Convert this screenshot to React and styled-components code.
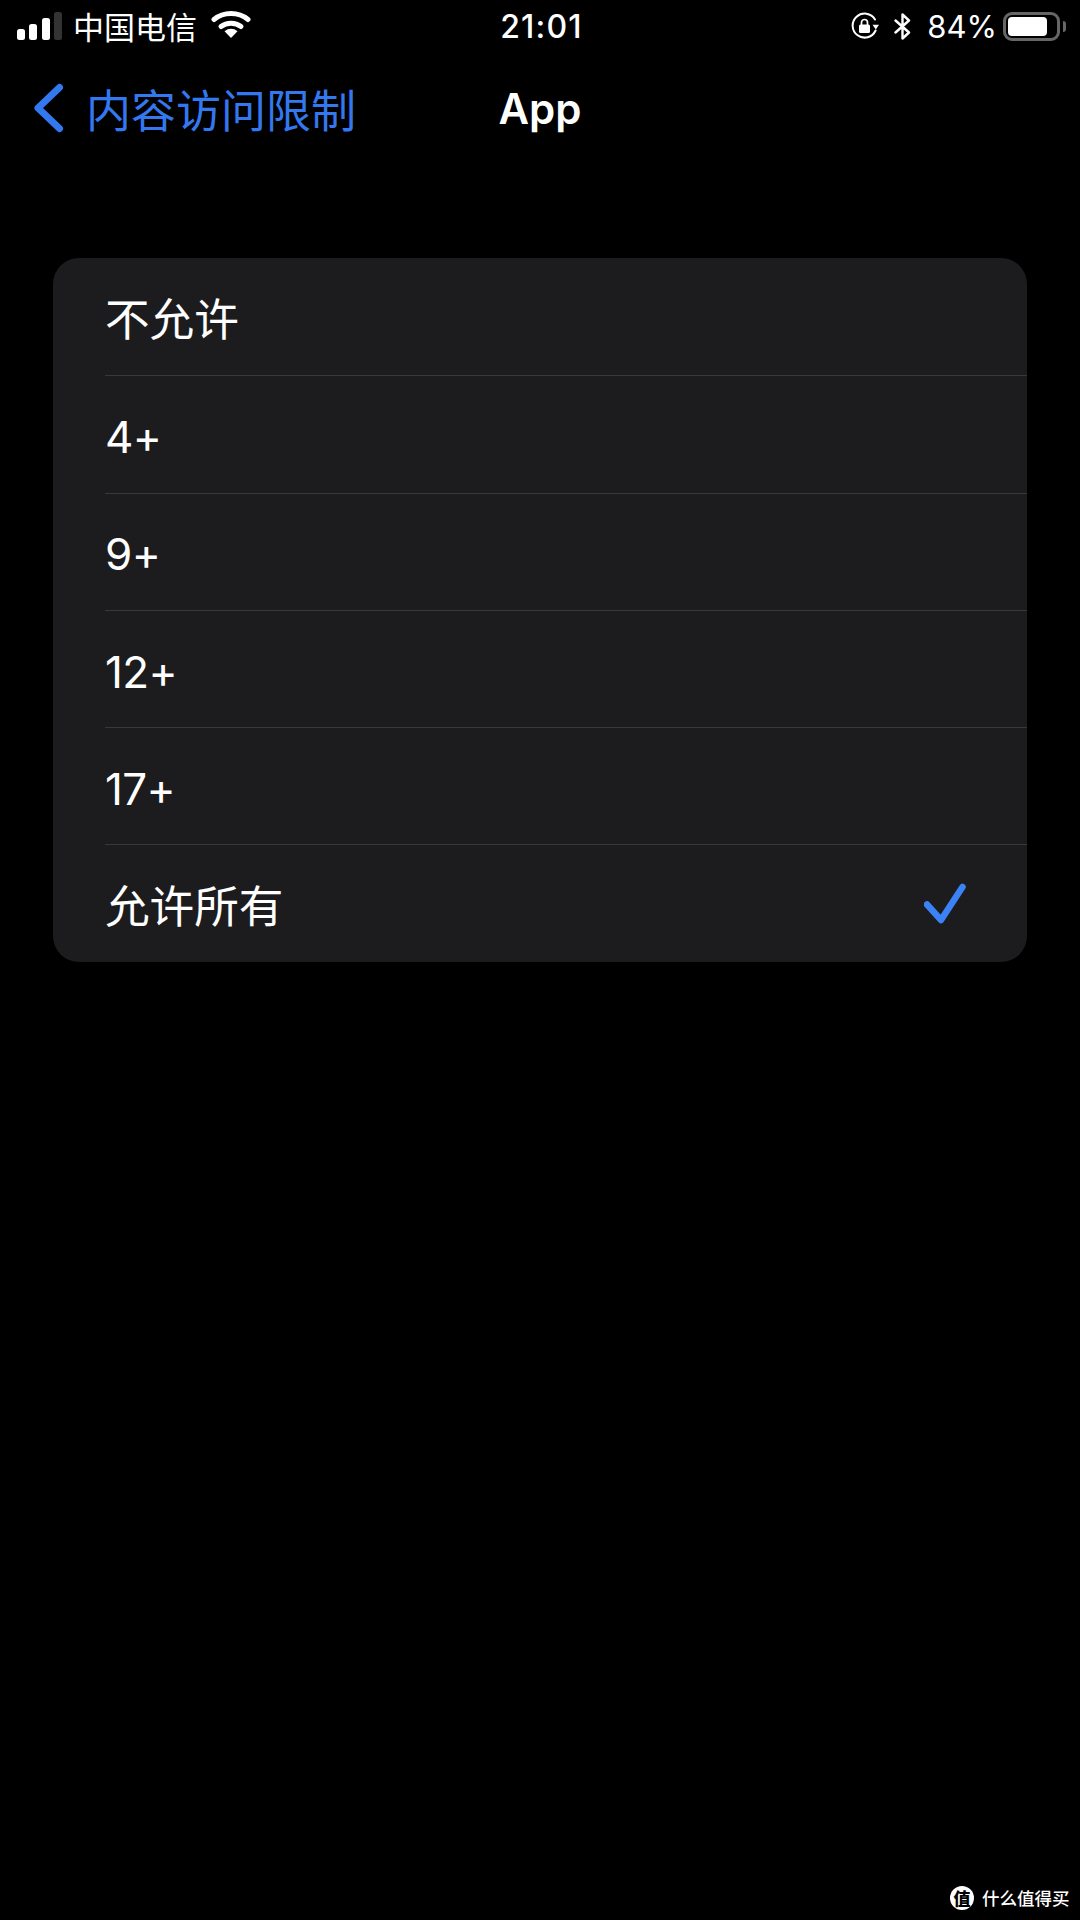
import React from 'react';
import styled, { createGlobalStyle } from 'styled-components';

const cjk = '"Noto Sans CJK SC", "Noto Sans", sans-serif';
const latin = 'Inter, "Noto Sans CJK SC", sans-serif';

const GlobalStyle = createGlobalStyle`
  html, body {
    margin: 0;
    padding: 0;
    background: #000;
  }
`;

const Page = styled.div`
  position: relative;
  width: 1080px;
  height: 1920px;
  background: #000;
  overflow: hidden;
  font-family: ${cjk};
  color: #fff;
`;

const StatusBar = styled.div`
  height: 52px;
  display: grid;
  grid-template-columns: 1fr auto 1fr;
  align-items: center;
  padding: 0 14px 0 17px;
`;

const StatusLeft = styled.div`
  display: flex;
  align-items: center;
`;

const StatusRight = styled.div`
  display: flex;
  align-items: center;
  justify-content: flex-end;
`;

const Carrier = styled.span`
  font-size: 31px;
  line-height: 46px;
  font-weight: 400;
  margin-left: 11px;
`;

const Clock = styled.span`
  font-family: ${latin};
  font-size: 32px;
  font-weight: 500;
  letter-spacing: 1.2px;
  line-height: 46px;
  padding-top: 2px;
`;

const Percent = styled.span`
  font-family: ${latin};
  font-size: 31px;
  font-weight: 400;
  line-height: 46px;
  padding-top: 2px;
  margin: 0 6px 0 16px;
`;

const WifiIcon = styled.svg`
  margin-left: 14px;
  margin-bottom: 6px;
`;

const LockIcon = styled.svg`
  margin-right: 15px;
`;

const Battery = styled.div`
  position: relative;
  box-sizing: border-box;
  width: 57px;
  height: 29px;
  border: 3px solid #666;
  border-radius: 9px;
  padding: 2px;
  margin-right: 6px;
  &::after {
    content: '';
    position: absolute;
    right: -9px;
    top: 6px;
    width: 3px;
    height: 11px;
    border-radius: 0 3px 3px 0;
    background: #666;
  }
`;

const BatteryFill = styled.div`
  width: 84%;
  height: 100%;
  background: #fff;
  border-radius: 4px;
`;

const NavBar = styled.div`
  position: relative;
  height: 82px;
  margin-top: 15px;
  display: flex;
  align-items: center;
  padding-left: 33px;
`;

const BackLink = styled.div`
  display: flex;
  align-items: center;
  gap: 22px;
  color: #3478f0;
  font-size: 45px;
  font-weight: 400;
`;

const NavTitle = styled.div`
  position: absolute;
  left: 0;
  right: 0;
  text-align: center;
  font-family: ${latin};
  font-size: 42px;
  font-weight: 600;
`;

const Card = styled.div`
  margin: 109px 53px 0;
  background: #1c1c1e;
  border-radius: 26px;
  overflow: hidden;
`;

const Row = styled.div`
  box-sizing: border-box;
  height: 117.3px;
  margin-left: 52px;
  padding-right: 61px;
  display: flex;
  align-items: center;
  justify-content: space-between;
  border-top: ${(p) => (p.$first ? 'none' : '1px solid #38383a')};
  font-size: 44.6px;
  font-weight: 400;
`;

const LatinLabel = styled.span`
  font-family: ${latin};
  font-size: 44px;
  letter-spacing: -0.6px;
  padding-top: 5px;
`;

const Watermark = styled.div`
  position: absolute;
  left: 950px;
  top: 1886px;
  display: flex;
  align-items: center;
  gap: 8px;
  font-size: 17.5px;
  font-weight: 500;
  line-height: 24px;
`;

const WatermarkBadge = styled.div`
  width: 24px;
  height: 24px;
  border-radius: 50%;
  background: #fff;
  color: #000;
  font-size: 17px;
  font-weight: 900;
  line-height: 24px;
  text-align: center;
`;

const options = [
  { label: '不允许' },
  { label: '4+', latin: true },
  { label: '9+', latin: true },
  { label: '12+', latin: true },
  { label: '17+', latin: true },
  { label: '允许所有', checked: true },
];

const SignalBars = () => (
  <svg width="45" height="28" viewBox="0 0 45 28">
    <rect x="0" y="17" width="8" height="11" rx="2.5" fill="#fff" />
    <rect x="12" y="12" width="8" height="16" rx="2.5" fill="#fff" />
    <rect x="25" y="6" width="8" height="22" rx="2.5" fill="#fff" />
    <rect x="37" y="0" width="8" height="28" rx="2.5" fill="#333" />
  </svg>
);

const Wifi = () => (
  <WifiIcon width="40" height="29" viewBox="0 0 40 29" fill="none">
    <path d="M3 10.5C12.5 2.5 27.5 2.5 37 10.5" stroke="#fff" strokeWidth="5" strokeLinecap="round" />
    <path d="M10 17.5C15.5 13 24.5 13 30 17.5" stroke="#fff" strokeWidth="5" strokeLinecap="round" />
    <path d="M13.5 22.3C17.5 19 22.5 19 26.5 22.3L20 29Z" fill="#fff" />
  </WifiIcon>
);

const RotationLock = () => (
  <LockIcon width="28" height="28" viewBox="0 0 28 28" fill="none">
    <path d="M24.6 18.5A12 12 0 1 1 24 7.5" stroke="#fff" strokeWidth="2" strokeLinecap="round" />
    <path d="M21.5 12.8H28L24.8 17.5Z" fill="#fff" />
    <rect x="8" y="12.5" width="11" height="8.5" rx="1.5" fill="#fff" />
    <path d="M10.5 13V10.5a3 3 0 0 1 6 0V13" stroke="#fff" strokeWidth="1.7" />
  </LockIcon>
);

const Bluetooth = () => (
  <svg width="17" height="27" viewBox="0 0 17 27" fill="none">
    <path d="M1.5 7.5L15 19.5L8.5 25.5V1.5L15 7.5L1.5 19.5" stroke="#fff" strokeWidth="2.4" strokeLinejoin="round" strokeLinecap="round" />
  </svg>
);

const BackChevron = () => (
  <svg width="31" height="50" viewBox="0 0 31 50" fill="none">
    <path d="M26.5 4.5L5 25L26.5 45.5" stroke="#3478f0" strokeWidth="7" strokeLinecap="round" strokeLinejoin="round" />
  </svg>
);

const CheckMark = () => (
  <svg width="42" height="42" viewBox="0 0 42 42" fill="none">
    <path d="M3 21.5L17 37L38.5 4" stroke="#3b82f6" strokeWidth="6.5" strokeLinecap="round" strokeLinejoin="round" />
  </svg>
);

const App = () => {
  return (
    <Page>
      <GlobalStyle />
      <StatusBar>
        <StatusLeft>
          <SignalBars />
          <Carrier>中国电信</Carrier>
          <Wifi />
        </StatusLeft>
        <Clock>21:01</Clock>
        <StatusRight>
          <RotationLock />
          <Bluetooth />
          <Percent>84%</Percent>
          <Battery>
            <BatteryFill />
          </Battery>
        </StatusRight>
      </StatusBar>
      <NavBar>
        <BackLink>
          <BackChevron />
          内容访问限制
        </BackLink>
        <NavTitle>App</NavTitle>
      </NavBar>
      <Card>
        {options.map((option, i) => (
          <Row key={option.label} $first={i === 0}>
            {option.latin ? <LatinLabel>{option.label}</LatinLabel> : option.label}
            {option.checked && <CheckMark />}
          </Row>
        ))}
      </Card>
      <Watermark>
        <WatermarkBadge>值</WatermarkBadge>
        什么值得买
      </Watermark>
    </Page>
  );
};

export default App;
